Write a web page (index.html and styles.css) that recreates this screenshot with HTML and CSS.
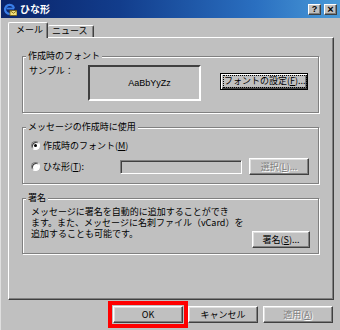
FILE: index.html
```html
<!DOCTYPE html>
<html lang="ja">
<head>
<meta charset="utf-8">
<title>ひな形</title>
<link rel="stylesheet" href="styles.css">
</head>
<body>
<div class="window">
  <div class="titlebar">
    <svg class="appicon" width="13" height="13" viewBox="0 0 13 13">
      <path d="M10 5.5 A4.5 4.5 0 1 0 9.2 9" fill="none" stroke="#3a7ee8" stroke-width="2.2"/>
      <path d="M2.5 5.5 H10" stroke="#3a7ee8" stroke-width="1.8"/>
      <rect x="6" y="7.5" width="7" height="5" fill="#f4e07a" stroke="#6b5a10" stroke-width="0.8"/>
      <path d="M6 7.5 L9.5 10.3 L13 7.5" fill="none" stroke="#6b5a10" stroke-width="0.8"/>
    </svg>
    <span class="title">ひな形</span>
    <div class="tbtns">
      <span class="tbtn">?</span>
      <span class="tbtn x">×</span>
    </div>
  </div>
  <div class="content">
    <div class="tabs">
      <div class="tab active">メール</div>
      <div class="tab">ニュース</div>
    </div>
    <div class="panel">
      <div class="group g1">
        <span class="legend">作成時のフォント</span>
        <div class="row1">
          <span class="samplelbl">サンプル：</span>
          <div class="sample">AaBbYyZz</div>
          <button class="btn default"><span class="focus">フォントの設定(<u>F</u>)...</span></button>
        </div>
      </div>
      <div class="group g2">
        <span class="legend">メッセージの作成時に使用</span>
        <div class="radiorow">
          <span class="radio checked"></span>
          <span>作成時のフォント(<u>M</u>)</span>
        </div>
        <div class="radiorow">
          <span class="radio"></span>
          <span class="rlabel">ひな形(<u>T</u>):</span>
          <div class="input"></div>
          <button class="btn disabled sel">選択(<u>L</u>)...</button>
        </div>
      </div>
      <div class="group g3">
        <span class="legend">署名</span>
        <div class="sigrow">
          <p class="sigtext">メッセージに署名を自動的に追加することができ<br>ます。また、メッセージに名刺ファイル（vCard）を<br>追加することも可能です。</p>
          <button class="btn sig">署名(<u>S</u>)...</button>
        </div>
      </div>
    </div>
    <div class="actions">
      <button class="btn act ok">OK</button>
      <button class="btn act">キャンセル</button>
      <button class="btn act disabled">適用(<u>A</u>)</button>
    </div>
  </div>
</div>
</body>
</html>
```
FILE: styles.css
```css
* { box-sizing: border-box; }
html, body {
  margin: 0;
  padding: 0;
}
body {
  width: 340px;
  height: 330px;
  overflow: hidden;
  background: #c0c0c0;
  font-family: "Noto Sans CJK JP", "Liberation Sans", sans-serif;
  font-size: 9px;
  color: #000;
}
.window {
  display: flex;
  flex-direction: column;
  height: 330px;
  border-left: 1px solid #dfdfdf;
}
.titlebar {
  height: 18px;
  display: flex;
  align-items: center;
  padding-left: 3px;
  background: linear-gradient(90deg, #0a246a 0%, #123d8c 35%, #2a6fc0 75%, #4a9ad8 100%);
}
.appicon { flex: none; }
.title {
  color: #fff;
  font-weight: bold;
  font-size: 10px;
  margin-left: 3px;
  line-height: 1;
}
.tbtns {
  margin-left: auto;
  display: flex;
  gap: 3px;
  margin-right: 3px;
}
.tbtn {
  width: 13px;
  height: 11px;
  background: #c0c0c0;
  border: 1px solid;
  border-color: #fff #404040 #404040 #fff;
  box-shadow: inset -1px -1px 0 #808080;
  font-family: "Liberation Sans", sans-serif;
  font-weight: bold;
  font-size: 9px;
  line-height: 9px;
  text-align: center;
  color: #000;
}
.tbtn.x { font-size: 11px; line-height: 8px; }
.content {
  display: flex;
  flex-direction: column;
  padding: 4px 6px 0 7px;
  flex: 1;
}
.tabs {
  display: flex;
  align-items: flex-end;
  height: 15px;
}
.tab {
  white-space: nowrap;
  height: 12px;
  padding: 0 5px 0 4px;
  line-height: 10px;
  border: 1px solid;
  border-color: #fff #404040 transparent #fff;
  border-bottom: none;
  box-shadow: inset -1px 0 0 #808080;
  border-radius: 2px 2px 0 0;
  background: #c0c0c0;
}
.tab.active {
  height: 16px;
  margin-bottom: -1px;
  position: relative;
  z-index: 1;
  padding: 0 4px 0 7px;
  line-height: 14px;
}
.tab:not(.active) {
  border-left: none;
}
.panel {
  height: 263px;
  border: 1px solid;
  border-color: #fff #404040 #404040 #fff;
  box-shadow: inset -1px -1px 0 #808080;
  padding: 18px 14px 0 13px;
  display: flex;
  flex-direction: column;
  gap: 14px;
}
.group {
  position: relative;
  border: 1px solid #808080;
  box-shadow: 1px 1px 0 #fff, inset 1px 1px 0 #fff;
}
.legend {
  position: absolute;
  top: -7px;
  left: 3px;
  padding: 0 2px;
  background: #c0c0c0;
  line-height: 12px;
}
.g1 {
  height: 57px;
  padding: 8px 0 0 6px;
}
.row1 {
  display: flex;
  align-items: flex-start;
}
.samplelbl {
  width: 59px;
  line-height: 11px;
}
.sample {
  width: 113px;
  height: 36px;
  border: 2px solid;
  border-color: #404040 #fff #fff #404040;
  display: flex;
  align-items: center;
  justify-content: center;
  font-family: "Liberation Sans", sans-serif;
  font-size: 9px;
  padding-left: 10px;
}
.btn {
  font-family: "Noto Sans CJK JP", "Liberation Sans", sans-serif;
  font-size: 9px;
  color: #000;
  background: #c0c0c0;
  height: 17px;
  padding: 0;
  border: 1px solid;
  border-color: #fff #404040 #404040 #fff;
  box-shadow: inset -1px -1px 0 #808080, inset 1px 1px 0 #dfdfdf;
  line-height: 13px;
  text-align: center;
}
.btn.default {
  margin-left: 19px;
  margin-top: 8px;
  width: 88px;
  border: 1px solid #000;
  box-shadow: inset 1px 1px 0 #fff, inset -1px -1px 0 #404040, inset -2px -2px 0 #808080;
  padding: 2px 3px;
  display: flex;
}
.focus {
  flex: 1;
  outline: 1px dotted #000;
  line-height: 10px;
  white-space: nowrap;
}
.disabled {
  color: #808080;
  text-shadow: 1px 1px 0 #fff;
}
.g2 {
  height: 57px;
  padding: 9px 0 0 8px;
  display: flex;
  flex-direction: column;
  gap: 4px;
}
.radiorow {
  display: flex;
  align-items: center;
  height: 17px;
}
.radio {
  width: 9px;
  height: 9px;
  border-radius: 50%;
  background: #fff;
  border: 1px solid;
  border-color: #808080 #fff #fff #808080;
  box-shadow: inset 1px 1px 0 #404040;
  margin-right: 3px;
  position: relative;
  flex: none;
}
.radio.checked::after {
  content: "";
  position: absolute;
  left: 2px;
  top: 2px;
  width: 3px;
  height: 3px;
  border-radius: 50%;
  background: #000;
}
.rlabel { width: 77px; }
.input {
  width: 122px;
  height: 14px;
  border: 1px solid;
  border-color: #808080 #fff #fff #808080;
  box-shadow: inset 1px 1px 0 #404040;
  background: #c0c0c0;
}
.btn.sel {
  width: 60px;
  margin-left: 7px;
}
.g3 {
  height: 56px;
  padding: 7px 8px 5px 8px;
}
.sigrow {
  display: flex;
  justify-content: space-between;
  align-items: flex-end;
  height: 100%;
}
.sigtext {
  margin: 0;
  align-self: flex-start;
  line-height: 11px;
  white-space: nowrap;
}
.btn.sig {
  width: 58px;
  flex: none;
}
.actions {
  display: flex;
  justify-content: flex-end;
  gap: 5px;
  margin-top: 6px;
  padding-right: 1px;
}
.btn.act {
  width: 70px;
  height: 17px;
}
.btn.ok {
  outline: 4px solid #f00;
  outline-offset: 1px;
}
```
